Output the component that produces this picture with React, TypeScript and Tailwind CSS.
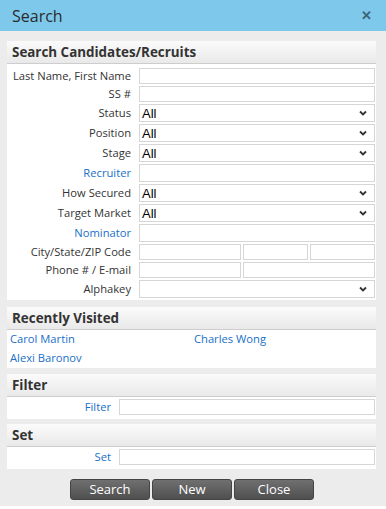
import React from "react";

const font = { fontFamily: '"Open Sans", "Liberation Sans", sans-serif' };

function Chevron() {
  return (
    <svg
      className="pointer-events-none absolute right-[7px] top-1/2 -translate-y-1/2"
      width="8"
      height="6"
      viewBox="0 0 8 6"
    >
      <path d="M1 1.5l3 3 3-3" fill="none" stroke="#333" strokeWidth="1.8" />
    </svg>
  );
}

function TextBox({ h = "h-4", className = "" }: { h?: string; className?: string }) {
  return <div className={`${h} border border-[#d6d6d6] bg-white ${className}`} />;
}

function SelectBox({ value = "All" }: { value?: string }) {
  return (
    <div className="relative h-[18px] border border-[#d6d6d6] bg-white">
      <span className="absolute left-[2px] top-[1px] text-[13px] leading-[15px] text-black [font-family:'Liberation_Sans',Arial,sans-serif]">
        {value}
      </span>
      <Chevron />
    </div>
  );
}

function Row({
  label,
  link,
  h,
  children,
}: {
  label: string;
  link?: boolean;
  h: string;
  children: React.ReactNode;
}) {
  return (
    <div className={`flex items-center ${h}`}>
      <div
        className={`w-[124px] shrink-0 whitespace-nowrap text-right text-[11.2px] leading-none ${
          link ? "text-[#1a6fc7]" : "text-[#333]"
        }`}
      >
        {label}
      </div>
      <div className="ml-2 mr-px flex-1">{children}</div>
    </div>
  );
}

function PanelHeader({ title }: { title: string }) {
  return (
    <div className="flex h-[23px] items-center border-b border-[#cdcdcd] bg-gradient-to-b from-[#fbfbfb] to-[#e9e9e9] pl-[5px] text-[13.4px] font-bold text-[#333]">
      {title}
    </div>
  );
}

function SingleField({ label }: { label: string }) {
  return (
    <div className="flex items-center pb-[4px] pt-[2px]">
      <div className="w-[104px] text-right text-[11.2px] leading-none text-[#1a6fc7]">{label}</div>
      <div className="ml-2 mr-px flex-1">
        <TextBox />
      </div>
    </div>
  );
}

function Btn({ children }: { children: React.ReactNode }) {
  return (
    <button className="flex h-[21px] w-[80px] items-center justify-center rounded-[3px] border border-[#444] bg-gradient-to-b from-[#707070] to-[#4f4f4f] text-[13px] text-white">
      {children}
    </button>
  );
}

export default function App() {
  return (
    <div style={font} className="flex h-[509px] w-[386px] flex-col bg-[#ececec]">
      {/* Title bar */}
      <div className="flex h-[31px] shrink-0 items-center justify-between bg-[#7dc8eb] pl-3 pr-[14px]">
        <span className="text-[16px] text-[#2b2b2b]">Search</span>
        <span className="text-[13px] font-bold text-[#3b6579]">✕</span>
      </div>

      <div className="flex flex-1 flex-col px-[7px] pt-[10px]">
        {/* Search Candidates/Recruits */}
        <div className="w-[369px] bg-white">
          <PanelHeader title="Search Candidates/Recruits" />
          <div className="flex flex-col gap-[2px] pb-[2px] pt-[4px]">
            <Row label="Last Name, First Name" h="h-4">
              <TextBox />
            </Row>
            <Row label="SS #" h="h-4">
              <TextBox />
            </Row>
            <Row label="Status" h="h-[18px]">
              <SelectBox />
            </Row>
            <Row label="Position" h="h-[18px]">
              <SelectBox />
            </Row>
            <Row label="Stage" h="h-[18px]">
              <SelectBox />
            </Row>
            <Row label="Recruiter" link h="h-[18px]">
              <TextBox h="h-[18px]" />
            </Row>
            <Row label="How Secured" h="h-[18px]">
              <SelectBox />
            </Row>
            <Row label="Target Market" h="h-[18px]">
              <SelectBox />
            </Row>
            <Row label="Nominator" link h="h-[18px]">
              <TextBox h="h-[18px]" />
            </Row>
            <Row label="City/State/ZIP Code" h="h-4">
              <div className="flex gap-[2px]">
                <TextBox className="w-[102px]" />
                <TextBox className="w-[65px]" />
                <TextBox className="flex-1" />
              </div>
            </Row>
            <Row label="Phone # / E-mail" h="h-4">
              <div className="flex gap-[2px]">
                <TextBox className="w-[102px]" />
                <TextBox className="flex-1" />
              </div>
            </Row>
            <Row label="Alphakey" h="h-[18px]">
              <SelectBox value="" />
            </Row>
          </div>
        </div>

        {/* Recently Visited */}
        <div className="mt-[7px] w-[369px] bg-white">
          <PanelHeader title="Recently Visited" />
          <div className="grid grid-cols-2 gap-y-[4px] pb-[3px] pl-[3px] pt-[1px] text-[11.2px] leading-[15px] text-[#1a6fc7]">
            <span>Carol Martin</span>
            <span className="pl-[1px]">Charles Wong</span>
            <span>Alexi Baronov</span>
          </div>
        </div>

        {/* Filter */}
        <div className="mt-[6px] w-[369px] bg-white">
          <PanelHeader title="Filter" />
          <SingleField label="Filter" />
        </div>

        {/* Set */}
        <div className="mt-[5px] w-[369px] bg-white">
          <PanelHeader title="Set" />
          <SingleField label="Set" />
        </div>

        <div className="mt-[10px] flex justify-center gap-[2px] pr-[2px]">
          <Btn>Search</Btn>
          <Btn>New</Btn>
          <Btn>Close</Btn>
        </div>
      </div>
      <div className="h-[3px] bg-white" />
    </div>
  );
}
